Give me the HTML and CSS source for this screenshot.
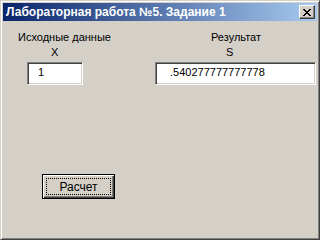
FILE: index.html
```html
<!DOCTYPE html>
<html lang="ru">

<head>
    <meta charset="UTF-8">
    <meta name="viewport" content="width=device-width, initial-scale=1.0">
    <title>Лабораторная работа №5</title>
    <link rel="stylesheet" href="styles.css">
</head>

<body>
    <div class="window">
        <div class="titlebar">
            <span class="title">Лабораторная работа №5. Задание 1</span>
            <div class="close-btn">
                <svg width="8" height="7" viewBox="0 0 8 7" shape-rendering="crispEdges">
                    <path d="M0 0h2v1H0zM6 0h2v1H6zM1 1h2v1H1zM5 1h2v1H5zM2 2h4v1H2zM3 3h2v1H3zM2 4h4v1H2zM1 5h2v1H1zM5 5h2v1H5zM0 6h2v1H0zM6 6h2v1H6z" fill="#000" />
                </svg>
            </div>
        </div>
        <div class="client">
            <div class="col col-src">
                <div class="caption">Исходные данные</div>
                <div class="var">X</div>
                <div class="field field-x">1</div>
            </div>
            <div class="col col-res">
                <div class="caption">Результат</div>
                <div class="var">S</div>
                <div class="field field-s">.540277777777778</div>
            </div>
            <div class="btn-row">
                <div class="btn"><span class="btn-focus">Расчет</span></div>
            </div>
        </div>
    </div>
</body>

</html>
```

FILE: styles.css
```css
* {
    box-sizing: border-box;
}

body {
    margin: 0;
    font-family: "Liberation Sans", Arial, sans-serif;
    font-size: 11px;
    color: #000;
}

.window {
    width: 320px;
    height: 240px;
    padding: 2px;
    background-color: #d4d0c8;
    border: 1px solid;
    border-color: #d4d0c8 #404040 #404040 #d4d0c8;
    box-shadow: inset 1px 1px #fff, inset -1px -1px #808080;
}

.titlebar {
    height: 18px;
    display: flex;
    align-items: center;
    justify-content: space-between;
    padding: 0 2px 0 3px;
    background: linear-gradient(to right, #0a246a, #a6caf0);
}

.title {
    color: #fff;
    font-weight: bold;
    font-size: 12px;
    line-height: 18px;
}

.close-btn {
    width: 16px;
    height: 14px;
    display: flex;
    align-items: center;
    justify-content: center;
    background-color: #d4d0c8;
    border: 1px solid;
    border-color: #fff #404040 #404040 #fff;
    box-shadow: inset -1px -1px #808080;
}

.close-btn svg {
    display: block;
}

.client {
    display: grid;
    grid-template-columns: 137px 161px;
    padding: 10px 0 0 15px;
}

.caption {
    line-height: 13px;
}

.var {
    line-height: 13px;
    margin-top: 2px;
}

.field {
    height: 23px;
    margin-top: 3px;
    line-height: 19px;
    background-color: #fff;
    border: 1px solid;
    border-color: #808080 #fff #fff #808080;
    box-shadow: inset 1px 1px #404040, inset -1px -1px #d4d0c8;
}

.col-src .var {
    margin-left: 33px;
}

.col-res .caption {
    margin-left: 56px;
}

.col-res .var {
    margin-left: 71px;
}

.field-x {
    width: 56px;
    margin-left: 9px;
    padding-left: 10px;
}

.field-s {
    width: 161px;
    padding-left: 14px;
}

.btn-row {
    grid-column: 1 / 3;
    padding: 89px 0 0 24px;
}

.btn {
    width: 73px;
    height: 25px;
    display: flex;
    padding: 3px;
    border: 1px solid #000;
    box-shadow: inset 1px 1px #fff, inset -1px -1px #404040, inset -2px -2px #808080;
}

.btn-focus {
    flex: 1;
    display: flex;
    align-items: center;
    justify-content: center;
    border: 1px dotted #000;
    font-size: 12px;
}
```
